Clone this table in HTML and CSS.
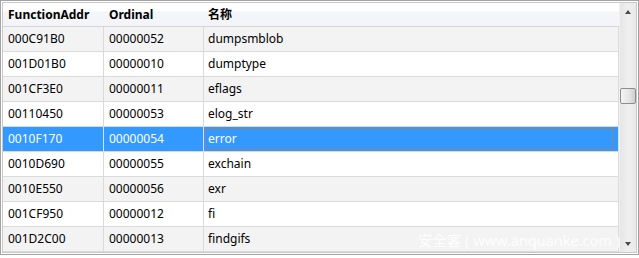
FILE: index.html
```html
<!DOCTYPE html>
<html>
<head>
<meta charset="utf-8">
<title>Exports</title>
<link rel="stylesheet" href="styles.css">
</head>
<body>
<div class="frame">
  <div class="listview">
    <div class="grid">
      <div class="row head">
        <div class="cell c1">FunctionAddr</div>
        <div class="cell c2">Ordinal</div>
        <div class="cell c3">名称</div>
      </div>
      <div class="row alt">
        <div class="cell c1">000C91B0</div>
        <div class="cell c2">00000052</div>
        <div class="cell c3">dumpsmblob</div>
      </div>
      <div class="row">
        <div class="cell c1">001D01B0</div>
        <div class="cell c2">00000010</div>
        <div class="cell c3">dumptype</div>
      </div>
      <div class="row alt">
        <div class="cell c1">001CF3E0</div>
        <div class="cell c2">00000011</div>
        <div class="cell c3">eflags</div>
      </div>
      <div class="row">
        <div class="cell c1">00110450</div>
        <div class="cell c2">00000053</div>
        <div class="cell c3">elog_str</div>
      </div>
      <div class="row selected">
        <div class="cell c1">0010F170</div>
        <div class="cell c2">00000054</div>
        <div class="cell c3"><span class="focus">error</span></div>
      </div>
      <div class="row">
        <div class="cell c1">0010D690</div>
        <div class="cell c2">00000055</div>
        <div class="cell c3">exchain</div>
      </div>
      <div class="row alt">
        <div class="cell c1">0010E550</div>
        <div class="cell c2">00000056</div>
        <div class="cell c3">exr</div>
      </div>
      <div class="row">
        <div class="cell c1">001CF950</div>
        <div class="cell c2">00000012</div>
        <div class="cell c3">fi</div>
      </div>
      <div class="row alt">
        <div class="cell c1">001D2C00</div>
        <div class="cell c2">00000013</div>
        <div class="cell c3">findgifs</div>
      </div>
    </div>
    <div class="vscroll">
      <div class="arrow up"></div>
      <div class="track"><div class="thumb"></div></div>
      <div class="arrow down"></div>
    </div>
  </div>
  <div class="watermark">安全客 ( www.anquanke.com )</div>
</div>
</body>
</html>
```

FILE: styles.css
```css
body{margin:0;background:#fff;font:12px/1 "Noto Sans","Noto Sans CJK SC",sans-serif;color:#000;}

.frame{position:relative;width:639px;height:255px;box-sizing:border-box;border:1px solid #a3a3a3;padding:1px;}
.listview{display:flex;height:100%;box-sizing:border-box;border:1px solid #c9c9c9;}

.grid{flex:1;display:flex;flex-direction:column;}
.row{display:flex;height:25px;box-sizing:border-box;border-bottom:1px solid #dadada;}
.row.alt{background:#f3f3f3;}
.row.head{height:24px;border-bottom-color:#d5d5d5;background:linear-gradient(#fff 0,#fff 8px,#f3f5f8 9px,#f3f5f8 100%);font-weight:bold;}
.row.selected{background:#3399ff;color:#fff;}

.cell{display:flex;align-items:center;box-sizing:border-box;padding-left:5px;border-right:1px solid #dadada;white-space:nowrap;}
.head .cell{border-right-color:transparent;}
.selected .cell{border-right-color:#cfe6ff;}
.c1{width:101px;}
.c2{width:100px;}
.c3{flex:1;padding:0 2px 0 4px;}

/* dotted focus box on the current cell */
.focus{display:flex;align-items:center;width:100%;height:22px;margin-left:-3px;padding-left:2px;box-sizing:border-box;border:1px dotted #c87a30;}

/* vertical scrollbar */
.vscroll{width:17px;display:flex;flex-direction:column;background:linear-gradient(90deg,#e6e6e6,#efefef 50%,#e9e9e9);border-left:1px solid #f2f2f2;box-sizing:border-box;}
.arrow{height:17px;display:flex;align-items:center;justify-content:center;}
.arrow::before{content:"";border-left:3.5px solid transparent;border-right:3.5px solid transparent;}
.arrow.up::before{border-bottom:4px solid #4a4a4a;}
.arrow.down::before{border-top:4px solid #4a4a4a;}
.track{flex:1;position:relative;}
.thumb{position:absolute;left:0;top:68px;width:14px;height:14px;border:1px solid #8d8d8d;border-radius:2px;background:linear-gradient(90deg,#f4f4f4,#e4e4e4 60%,#cfcfcf);}

.watermark{position:absolute;right:18px;top:229px;font:14.5px/20px "Noto Sans","Noto Sans CJK SC",sans-serif;color:rgba(255,255,255,.9);white-space:nowrap;}
```
